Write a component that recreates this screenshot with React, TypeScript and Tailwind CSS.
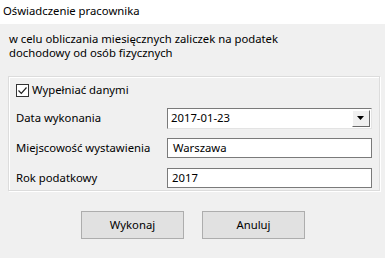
const font = { fontFamily: '"Noto Sans", "Liberation Sans", sans-serif' }

function Field({ label, children }: { label: string; children: React.ReactNode }) {
  return (
    <div className="flex items-center h-[20px]">
      <span className="w-[151px] shrink-0 text-[#000]">{label}</span>
      {children}
    </div>
  )
}

export default function App() {
  return (
    <div className="w-[385px] h-[258px] flex flex-col bg-[#f0f0f0] text-[11.3px] leading-[14px] text-black font-['Noto_Sans',sans-serif]">
      {/* title bar */}
      <div className="h-[24px] shrink-0 bg-white flex items-center pl-[3px] pb-[2px]">
        Oświadczenie pracownika
      </div>

      <div className="flex flex-col px-[8px] pt-[8px]">
        <p className="pl-[1px] leading-[14px] flex flex-col">
          <span>w celu obliczania miesięcznych zaliczek na podatek</span>
          <span>dochodowy od osób fizycznych</span>
        </p>

        {/* group box */}
        <div className="mt-[16px] w-[372px] h-[115px] border border-[#dcdcdc] shadow-[inset_1px_1px_0_#fff,1px_1px_0_#fff] px-[7px] pt-[6px] flex flex-col">
          <label className="flex items-center gap-[3px] h-[14px]">
            <span className="w-[13px] h-[13px] border border-[#333] bg-white flex items-center justify-center">
              <svg width="11" height="11" viewBox="0 0 11 11">
                <path d="M1.5 5.5 L4.3 8.3 L9.5 2.5" fill="none" stroke="#222" strokeWidth="1.2" />
              </svg>
            </span>
            Wypełniać danymi
          </label>

          <div className="flex flex-col gap-[10px] mt-[11px]">
            <Field label="Data wykonania">
              <div className="w-[205px] h-[21px] flex items-center border border-[#7a7a7a] border-b-[#e3e3e3] border-r-[#e3e3e3] bg-white">
                <span className="flex-1 pl-[3px]">2017-01-23</span>
                <span className="w-[18px] h-[17px] mr-[1px] flex items-center justify-center bg-[#f0f0f0] border border-[#fff] border-r-[#696969] border-b-[#696969]">
                  <svg width="8" height="5" viewBox="0 0 8 5">
                    <path d="M0 0 H7 L3.5 4 Z" fill="#000" />
                  </svg>
                </span>
              </div>
            </Field>
            <Field label="Miejscowość wystawienia">
              <div className="w-[206px] h-[20px] flex items-center border border-[#7a7a7a] bg-white pl-[5px]">
                Warszawa
              </div>
            </Field>
            <Field label="Rok podatkowy">
              <div className="w-[206px] h-[20px] flex items-center border border-[#7a7a7a] bg-white pl-[4px]">
                2017
              </div>
            </Field>
          </div>
        </div>

        {/* buttons */}
        <div className="flex justify-center gap-[18px] mt-[20px] pl-[1px]">
          <button style={font} className="w-[103px] h-[28px] bg-[#e1e1e1] border border-[#adadad] text-[11.3px]">
            Wykonaj
          </button>
          <button style={font} className="w-[103px] h-[28px] bg-[#e1e1e1] border border-[#adadad] text-[11.3px]">
            Anuluj
          </button>
        </div>
      </div>
    </div>
  )
}
